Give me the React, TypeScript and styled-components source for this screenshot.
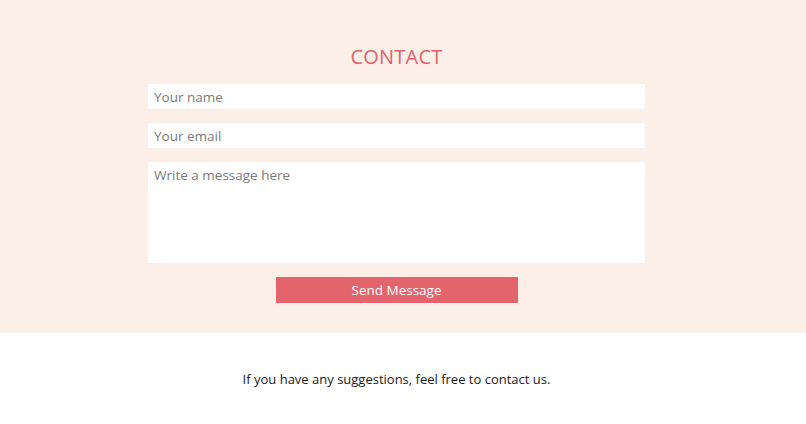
import React from "react";
import styled, { createGlobalStyle } from "styled-components";

const GlobalStyle = createGlobalStyle`
  body {
    margin: 0;
    font-family: "Open Sans", "DejaVu Sans", sans-serif;
    background: #ffffff;
  }
`;

const ContactSection = styled.section`
  background: #fbefe7;
  height: 333px;
  box-sizing: border-box;
  padding: 44px 13px 0 0;
  display: flex;
  flex-direction: column;
  align-items: center;
`;

const Title = styled.h2`
  margin: 0 0 14px;
  font-size: 20px;
  font-weight: 400;
  line-height: 26px;
  color: #e0636c;
  letter-spacing: 0.2px;
`;

const Form = styled.form`
  width: 497px;
  display: flex;
  flex-direction: column;
  align-items: center;
  gap: 14px;
`;

const Field = styled.input`
  width: 100%;
  height: 25px;
  box-sizing: border-box;
  border: none;
  outline: none;
  background: #ffffff;
  padding: 0 6px;
  font-family: inherit;
  font-size: 13.5px;
  color: #333;
  &::placeholder {
    color: #7a7a7a;
  }
`;

const MessageBox = styled.textarea`
  width: 100%;
  height: 101px;
  box-sizing: border-box;
  border: none;
  outline: none;
  resize: none;
  background: #ffffff;
  padding: 4px 6px;
  font-family: inherit;
  font-size: 13.5px;
  color: #333;
  &::placeholder {
    color: #7a7a7a;
  }
`;

const SendButton = styled.button`
  width: 242px;
  height: 26px;
  border: none;
  background: #e3646d;
  color: #ffffff;
  font-family: inherit;
  font-size: 13.5px;
  cursor: pointer;
`;

const Footer = styled.footer`
  height: 91px;
  padding-right: 13px;
  display: flex;
  align-items: center;
  justify-content: center;
`;

const FooterText = styled.p`
  margin: 0;
  font-size: 13px;
  color: #1a1a1a;
`;

export default function App() {
  return (
    <>
      <GlobalStyle />
      <ContactSection>
        <Title>CONTACT</Title>
        <Form onSubmit={(e) => e.preventDefault()}>
          <Field type="text" placeholder="Your name" />
          <Field type="email" placeholder="Your email" />
          <MessageBox placeholder="Write a message here" />
          <SendButton type="submit">Send Message</SendButton>
        </Form>
      </ContactSection>
      <Footer>
        <FooterText>If you have any suggestions, feel free to contact us.</FooterText>
      </Footer>
    </>
  );
}
